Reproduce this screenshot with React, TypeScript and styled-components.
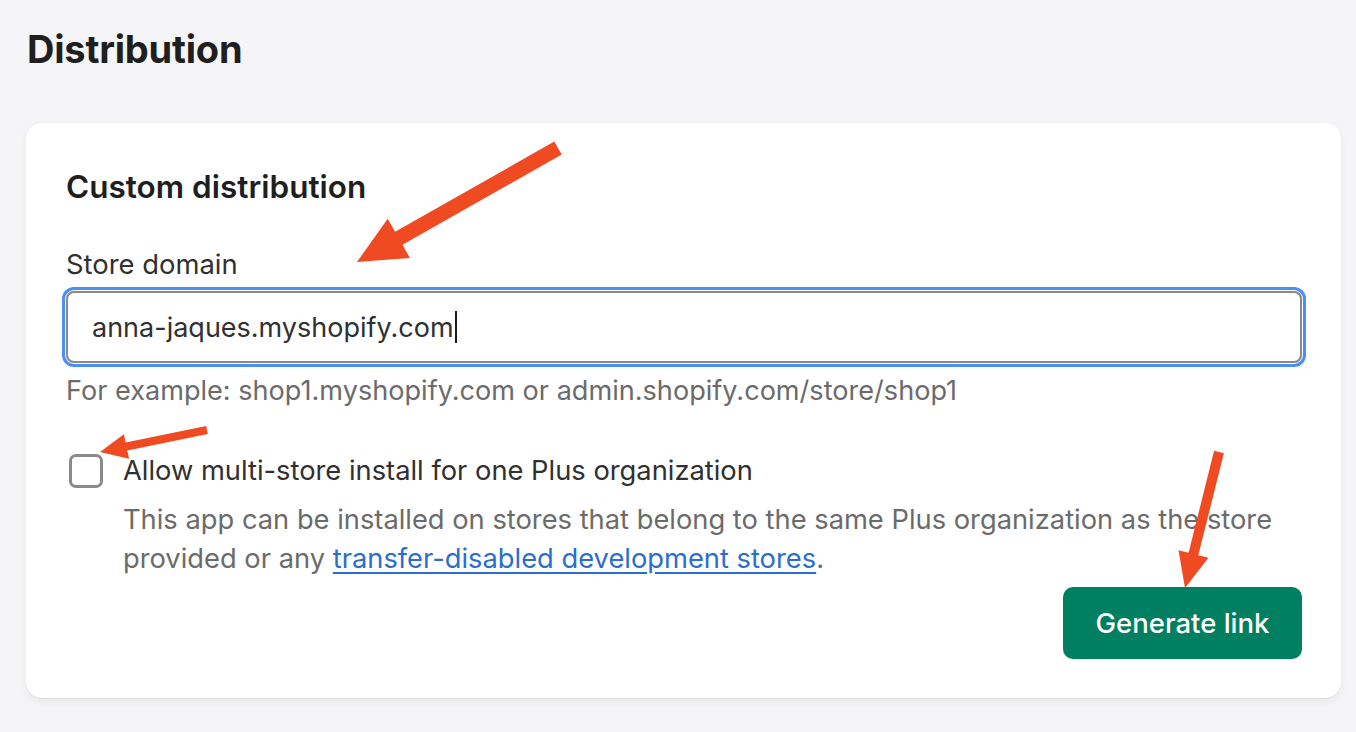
import React from "react";
import styled, { createGlobalStyle } from "styled-components";

const GlobalStyle = createGlobalStyle`
  html, body {
    margin: 0;
    padding: 0;
    background: #f5f5f7;
  }
  body {
    font-family: Inter, "Noto Sans", "Liberation Sans", sans-serif;
    color: #303030;
    -webkit-font-smoothing: antialiased;
  }
`;

const Page = styled.div`
  position: relative;
  width: 1356px;
  height: 732px;
  overflow: hidden;
  padding: 25px 15px 0 26px;
  box-sizing: border-box;
`;

const PageTitle = styled.h1`
  margin: 0 0 50px 1px;
  font-size: 38px;
  line-height: 48px;
  font-weight: 700;
  color: #1f1f1f;
  letter-spacing: -0.2px;
`;

const Card = styled.section`
  background: #ffffff;
  border-radius: 16px;
  box-shadow: 0 1px 1px rgba(0, 0, 0, 0.05), 0 4px 10px rgba(0, 0, 0, 0.06);
  padding: 44px 39px 39px 40px;
  display: flex;
  flex-direction: column;
`;

const CardTitle = styled.h2`
  margin: 0 0 37px;
  font-size: 31.5px;
  line-height: 40px;
  font-weight: 600;
  color: #1f1f1f;
`;

const Label = styled.label`
  display: block;
  font-size: 27.4px;
  line-height: 40px;
  color: #303030;
  margin-bottom: 7px;
`;

const Input = styled.div`
  height: 72px;
  box-sizing: border-box;
  border: 2px solid #8a8a8a;
  border-radius: 8px;
  box-shadow: 0 0 0 1px #ffffff, 0 0 0 4px #4a8ff5;
  display: flex;
  align-items: center;
  padding: 0 24px;
  font-size: 27px;
  color: #303030;
`;

const Caret = styled.span`
  display: inline-block;
  width: 2px;
  height: 32px;
  background: #1a1a1a;
  margin-left: 1px;
`;

const HelpText = styled.p`
  margin: 8px 0 0;
  font-size: 27.1px;
  line-height: 40px;
  color: #6b6b6b;
`;

const CheckRow = styled.div`
  margin-top: 40px;
  display: grid;
  grid-template-columns: 34px 1fr;
  column-gap: 20px;
  padding-left: 3px;
`;

const Box = styled.span`
  width: 34px;
  height: 34px;
  box-sizing: border-box;
  border: 3px solid #8a8a8a;
  border-radius: 7px;
  background: #fff;
  align-self: center;
`;

const CheckLabel = styled.span`
  font-size: 27.3px;
  line-height: 40px;
  color: #303030;
`;

const Description = styled.p`
  grid-column: 2;
  margin: 9px 0 0;
  font-size: 27.3px;
  line-height: 39px;
  color: #6b6b6b;
`;

const Link = styled.a`
  color: #2c6ecb;
  text-decoration: underline;
  text-underline-offset: 4px;
`;

const Actions = styled.div`
  display: flex;
  justify-content: flex-end;
  margin-top: 9px;
`;

const PrimaryButton = styled.button`
  height: 72px;
  width: 239px;
  border: none;
  border-radius: 10px;
  background: #008060;
  color: #ffffff;
  font-family: inherit;
  font-size: 27.5px;
  font-weight: 500;
  box-shadow: 0 1px 0 rgba(0, 0, 0, 0.08);
`;

const Overlay = styled.svg`
  position: absolute;
  top: 0;
  left: 0;
  pointer-events: none;
`;

type ArrowProps = {
  x1: number;
  y1: number;
  x2: number;
  y2: number;
  shaft: number;
  headLen: number;
  headWidth: number;
};

function Arrow({ x1, y1, x2, y2, shaft, headLen, headWidth }: ArrowProps) {
  const dx = x2 - x1;
  const dy = y2 - y1;
  const len = Math.hypot(dx, dy);
  const ux = dx / len;
  const uy = dy / len;
  const nx = -uy;
  const ny = ux;
  const bx = x2 - ux * headLen;
  const by = y2 - uy * headLen;
  const pts = [
    [x1 + nx * shaft * 0.5, y1 + ny * shaft * 0.5],
    [bx + nx * shaft * 0.5, by + ny * shaft * 0.5],
    [bx + nx * headWidth * 0.5, by + ny * headWidth * 0.5],
    [x2, y2],
    [bx - nx * headWidth * 0.5, by - ny * headWidth * 0.5],
    [bx - nx * shaft * 0.5, by - ny * shaft * 0.5],
    [x1 - nx * shaft * 0.5, y1 - ny * shaft * 0.5],
  ]
    .map(([x, y]) => `${x.toFixed(1)},${y.toFixed(1)}`)
    .join(" ");
  return <polygon points={pts} fill="#f04a23" />;
}

export default function App() {
  return (
    <>
      <GlobalStyle />
      <Page>
        <PageTitle>Distribution</PageTitle>
        <Card>
          <CardTitle>Custom distribution</CardTitle>
          <Label>Store domain</Label>
          <Input>
            anna-jaques.myshopify.com
            <Caret />
          </Input>
          <HelpText>For example: shop1.myshopify.com or admin.shopify.com/store/shop1</HelpText>
          <CheckRow>
            <Box />
            <CheckLabel>Allow multi-store install for one Plus organization</CheckLabel>
            <Description>
              This app can be installed on stores that belong to the same Plus organization as the store
              provided or any <Link href="#">transfer-disabled development stores</Link>.
            </Description>
          </CheckRow>
          <Actions>
            <PrimaryButton>Generate link</PrimaryButton>
          </Actions>
        </Card>
        <Overlay width={1356} height={732} viewBox="0 0 1356 732">
          <Arrow x1={558} y1={148} x2={357} y2={262} shaft={15} headLen={48} headWidth={45} />
          <Arrow x1={207} y1={430} x2={100} y2={452} shaft={8} headLen={27} headWidth={25} />
          <Arrow x1={1219} y1={452} x2={1185} y2={588} shaft={10} headLen={35} headWidth={31} />
        </Overlay>
      </Page>
    </>
  );
}
